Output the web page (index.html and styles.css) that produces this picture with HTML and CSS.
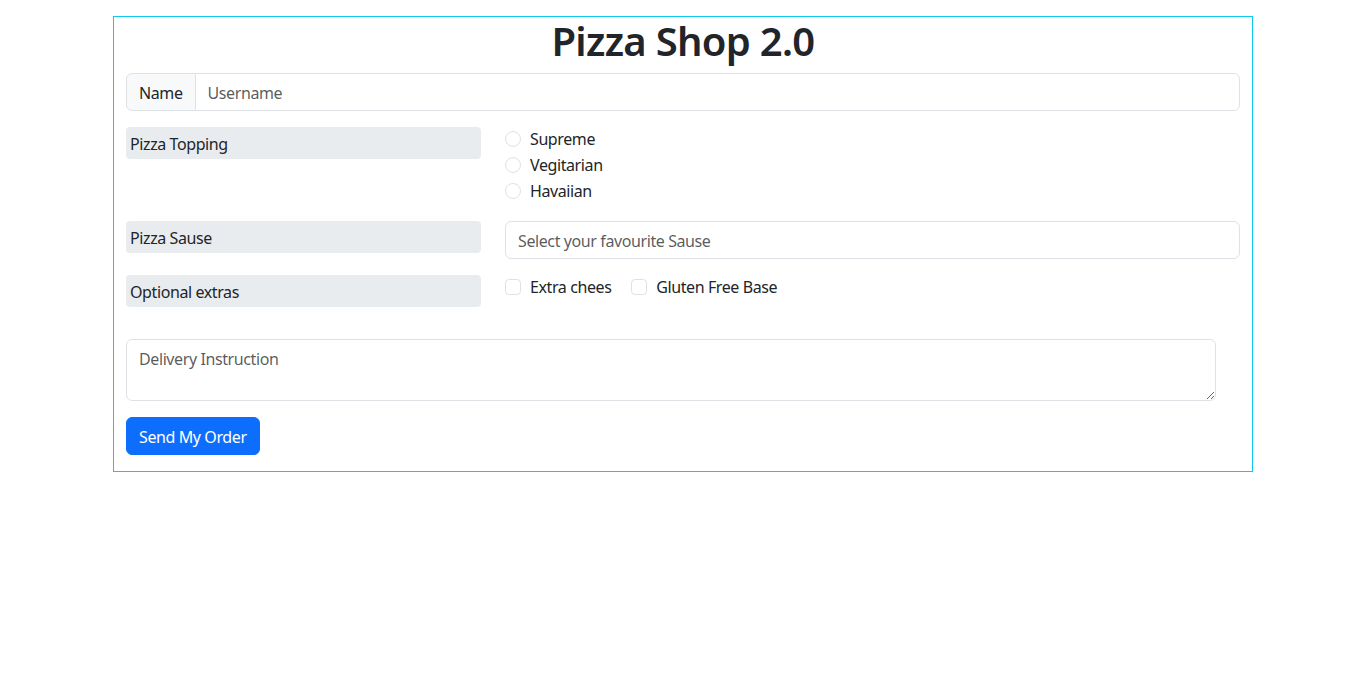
FILE: index.html
```html
<!DOCTYPE html>
<html lang="en">
<head>
<meta charset="utf-8">
<title>Pizza Shop 2.0</title>
<link rel="stylesheet" href="styles.css">
</head>
<body>
<div class="box">
  <h1 class="title">Pizza Shop 2.0</h1>
  <form class="order">
    <div class="input-group">
      <span class="addon">Name</span>
      <input class="field" type="text" placeholder="Username">
    </div>
    <div class="row">
      <div class="col-4"><label class="tag">Pizza Topping</label></div>
      <div class="col-8">
        <div class="check"><input class="radio" type="radio" name="top" id="t1"><label for="t1">Supreme</label></div>
        <div class="check"><input class="radio" type="radio" name="top" id="t2"><label for="t2">Vegitarian</label></div>
        <div class="check"><input class="radio" type="radio" name="top" id="t3"><label for="t3">Havaiian</label></div>
      </div>
    </div>
    <div class="row">
      <div class="col-4"><label class="tag">Pizza Sause</label></div>
      <div class="col-8"><input class="field full" type="text" placeholder="Select your favourite Sause"></div>
    </div>
    <div class="row row-extras">
      <div class="col-4"><label class="tag">Optional extras</label></div>
      <div class="col-8">
        <div class="check inline"><input class="box-check" type="checkbox" id="e1"><label for="e1">Extra chees</label></div>
        <div class="check inline"><input class="box-check" type="checkbox" id="e2"><label for="e2">Gluten Free Base</label></div>
      </div>
    </div>
    <textarea class="note" rows="2" placeholder="Delivery Instruction"></textarea>
    <button class="send" type="button">Send My Order</button>
  </form>
</div>
</body>
</html>
```

FILE: styles.css
```css
* { box-sizing: border-box; }
html, body { margin: 0; padding: 0; background: #fff; }
body {
  font-family: "Noto Sans", "Open Sans", sans-serif;
  font-size: 16px;
  line-height: 24px;
  letter-spacing: -0.4px;
  color: #212529;
}
.box {
  width: 1140px;
  margin: 16px auto 0;
  border: 1px solid #0dcaf0;
  padding: 0 12px 16px;
}
.title {
  margin: 0 0 8px;
  text-align: center;
  font-size: 40px;
  line-height: 48px;
  font-weight: 600;
  letter-spacing: -0.7px;
}
.order { display: flex; flex-direction: column; align-items: flex-start; }
.input-group {
  display: flex;
  width: 100%;
  margin-bottom: 16px;
}
.addon {
  padding: 7px 12px 5px;
  background: #f8f9fa;
  border: 1px solid #dee2e6;
  border-radius: 6px 0 0 6px;
  line-height: 24px;
}
.field {
  font: inherit;
  letter-spacing: inherit;
  color: #212529;
  padding: 7px 12px 5px;
  border: 1px solid #dee2e6;
  line-height: 24px;
  height: 38px;
  outline: none;
  background: #fff;
}
.input-group .field {
  flex: 1;
  margin-left: -1px;
  border-radius: 0 6px 6px 0;
}
.field.full { width: 100%; border-radius: 6px; }
.field::placeholder, .note::placeholder { color: rgba(33, 37, 41, 0.75); }
.row {
  display: flex;
  width: 100%;
  gap: 24px;
  margin-bottom: 16px;
}
.row-extras { margin-bottom: 32px; }
.col-4 { flex: 0 0 355px; }
.col-8 { flex: 1; }
.tag {
  display: block;
  background: #e9ecef;
  border-radius: 4px;
  padding: 5px 4px 3px;
  line-height: 24px;
}
.check {
  display: flex;
  align-items: flex-start;
  height: 24px;
  margin-bottom: 2px;
}
.check label { line-height: 23px; padding-top: 1px; }
.check.inline { display: inline-flex; margin-right: 16px; margin-bottom: 0; }
.radio, .box-check {
  appearance: none;
  -webkit-appearance: none;
  width: 16px;
  height: 16px;
  margin: 4px 9px 0 0;
  border: 1px solid #dee2e6;
  background: #fff;
  flex: none;
}
.radio { border-radius: 50%; }
.box-check { border-radius: 4px; }
.note {
  font: inherit;
  letter-spacing: inherit;
  color: #212529;
  width: 1090px;
  height: 62px;
  padding: 7px 12px 5px;
  border: 1px solid #dee2e6;
  border-radius: 6px;
  line-height: 24px;
  resize: vertical;
  margin-bottom: 16px;
  outline: none;
}
.send {
  font: inherit;
  letter-spacing: inherit;
  line-height: 24px;
  color: #fff;
  background: #0d6efd;
  border: 1px solid #0d6efd;
  border-radius: 6px;
  padding: 7px 12px 5px;
  cursor: pointer;
}
```
